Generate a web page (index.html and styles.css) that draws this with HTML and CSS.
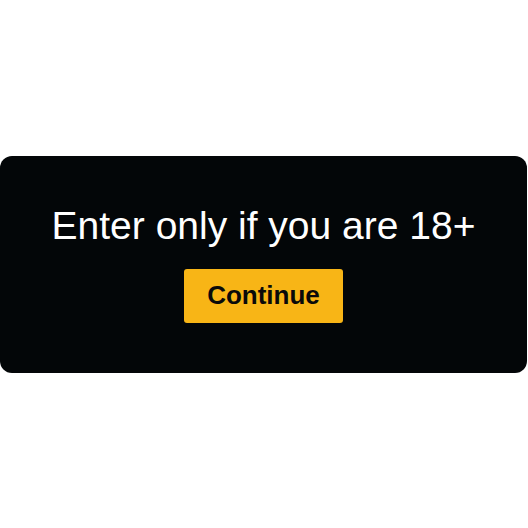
FILE: index.html
```html
<!DOCTYPE html>
<html>
<head>
<meta charset="utf-8">
<link rel="stylesheet" href="styles.css">
</head>
<body>
<div class="card">
  <h1 class="title">Enter only if you are 18+</h1>
  <button class="btn">Continue</button>
</div>
</body>
</html>
```
FILE: styles.css
```css
html, body {
  margin: 0;
  padding: 0;
  background: #ffffff;
}
body {
  height: 528px;
  display: flex;
  align-items: center;
  justify-content: flex-start;
  font-family: "Liberation Sans", Arial, sans-serif;
}
.card {
  width: 527px;
  height: 217px;
  box-sizing: border-box;
  background: #030608;
  border-radius: 12px;
  display: flex;
  flex-direction: column;
  align-items: center;
  padding-top: 47px;
}
.title {
  margin: 0;
  color: #ffffff;
  font-weight: 400;
  font-size: 39px;
  line-height: 45px;
  white-space: nowrap;
}
.btn {
  margin-top: 21px;
  width: 159px;
  height: 54px;
  border: none;
  border-radius: 3px;
  background: #f8b516;
  color: #0a0a0a;
  font-family: "Liberation Sans", Arial, sans-serif;
  font-weight: 700;
  font-size: 26px;
  padding: 0;
  cursor: pointer;
}
```
